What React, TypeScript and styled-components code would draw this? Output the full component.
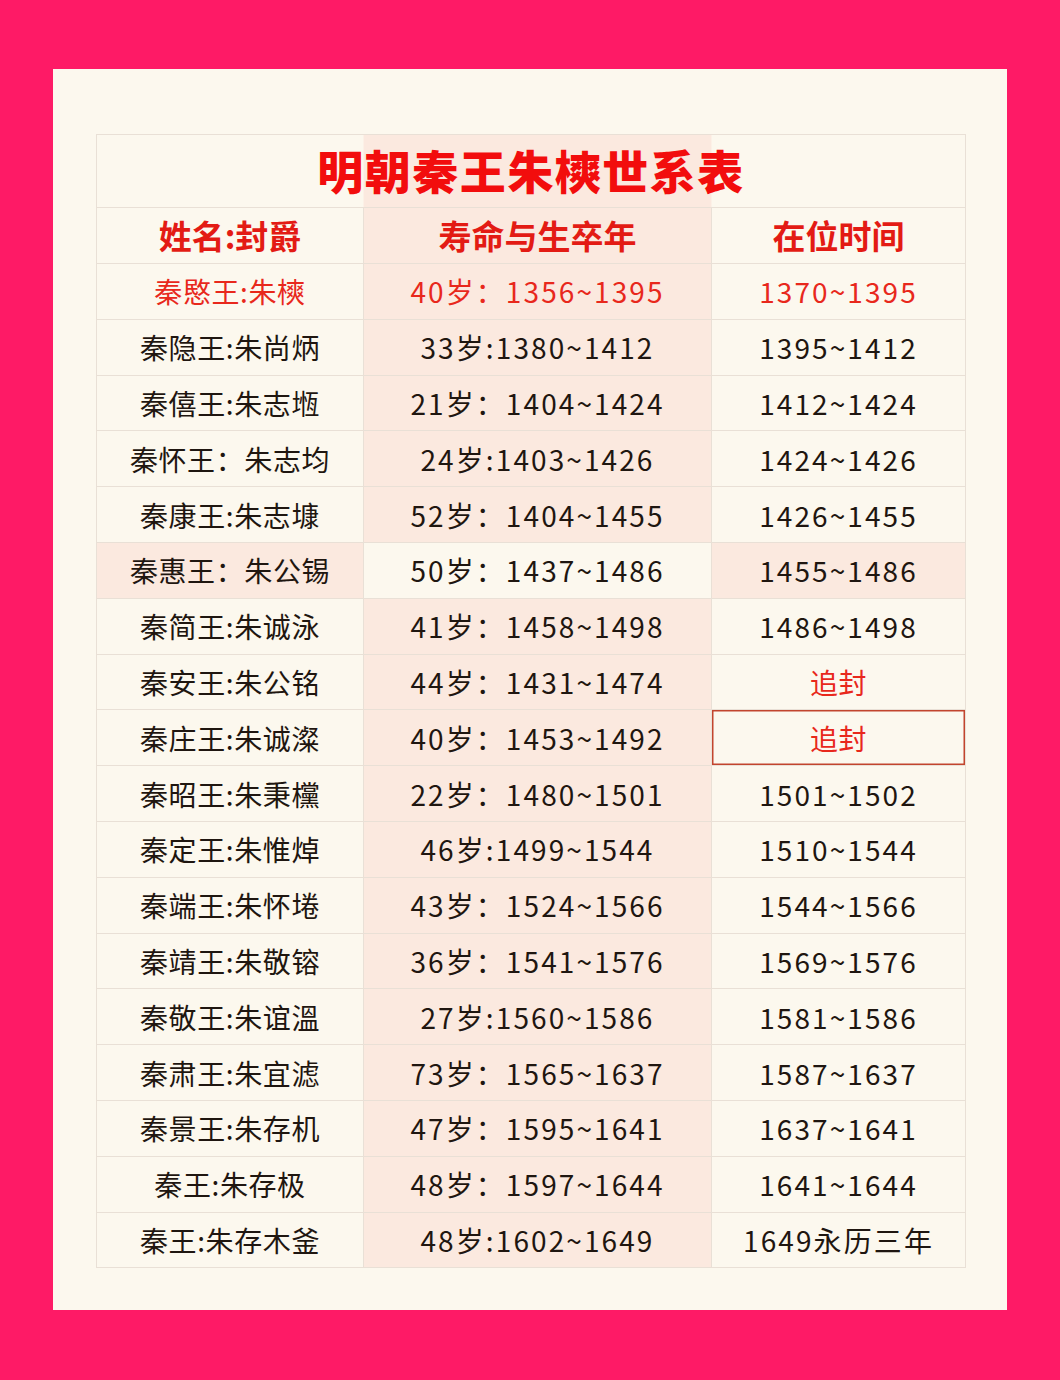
import styled, { createGlobalStyle } from 'styled-components'

const GlobalStyle = createGlobalStyle`
  html, body {
    margin: 0;
    padding: 0;
    background: #fe1a66;
  }
  body {
    font-family: "Noto Sans CJK SC", "Noto Sans", sans-serif;
  }
`

const CREAM = '#fcf8ee'
const PINK = '#fbe9df'
const LINE = '#e9e0d6'

interface Row {
  name: string
  life: string
  reign: string
  red?: boolean
  reignRed?: boolean
  boxed?: boolean
  swap?: boolean
}

const rows: Row[] = [
  { name: '秦愍王:朱樉', life: '40岁：1356~1395', reign: '1370~1395', red: true },
  { name: '秦隐王:朱尚炳', life: '33岁:1380~1412', reign: '1395~1412' },
  { name: '秦僖王:朱志堩', life: '21岁：1404~1424', reign: '1412~1424' },
  { name: '秦怀王：朱志均', life: '24岁:1403~1426', reign: '1424~1426' },
  { name: '秦康王:朱志𡐓', life: '52岁：1404~1455', reign: '1426~1455' },
  { name: '秦惠王：朱公锡', life: '50岁：1437~1486', reign: '1455~1486', swap: true },
  { name: '秦简王:朱诚泳', life: '41岁：1458~1498', reign: '1486~1498' },
  { name: '秦安王:朱公铭', life: '44岁：1431~1474', reign: '追封', reignRed: true },
  { name: '秦庄王:朱诚澯', life: '40岁：1453~1492', reign: '追封', reignRed: true, boxed: true },
  { name: '秦昭王:朱秉欓', life: '22岁：1480~1501', reign: '1501~1502' },
  { name: '秦定王:朱惟焯', life: '46岁:1499~1544', reign: '1510~1544' },
  { name: '秦端王:朱怀埢', life: '43岁：1524~1566', reign: '1544~1566' },
  { name: '秦靖王:朱敬镕', life: '36岁：1541~1576', reign: '1569~1576' },
  { name: '秦敬王:朱谊溫', life: '27岁:1560~1586', reign: '1581~1586' },
  { name: '秦肃王:朱宜滤', life: '73岁：1565~1637', reign: '1587~1637' },
  { name: '秦景王:朱存机', life: '47岁：1595~1641', reign: '1637~1641' },
  { name: '秦王:朱存极', life: '48岁：1597~1644', reign: '1641~1644' },
  { name: '秦王:朱存木釜', life: '48岁:1602~1649', reign: '1649永历三年' },
]

const Page = styled.div`
  width: 1060px;
  height: 1380px;
  padding: 69px 53px 0;
  box-sizing: border-box;
`

const Card = styled.div`
  width: 954px;
  height: 1241px;
  background: ${CREAM};
  padding: 65px 42px 0 43px;
  box-sizing: border-box;
`

const Table = styled.table`
  width: 869px;
  border-collapse: collapse;
  table-layout: fixed;
  border: 1px solid ${LINE};
`

const TitleCell = styled.th`
  height: 73px;
  padding: 0 0 4px;
  box-sizing: border-box;
  border: 1px solid ${LINE};
  background: linear-gradient(
    to right,
    ${CREAM} 0,
    ${CREAM} 30.7%,
    ${PINK} 30.7%,
    ${PINK} 70.7%,
    ${CREAM} 70.7%
  );
  color: #f20d0d;
  font-size: 46px;
  font-weight: 900;
  letter-spacing: 1.5px;
  line-height: 1;
  text-align: center;
`

const HeadCell = styled.th<{ $pink?: boolean }>`
  height: 55px;
  padding: 0;
  border: 1px solid ${LINE};
  background: ${p => (p.$pink ? PINK : CREAM)};
  color: #e31b14;
  font-size: 33px;
  font-weight: 700;
  line-height: 1;
  text-align: center;
`

const Cell = styled.td<{ $pink?: boolean; $red?: boolean; $boxed?: boolean; $num?: boolean }>`
  height: 54.8px;
  padding: 0;
  border: 1px solid ${LINE};
  box-shadow: ${p => (p.$boxed ? 'inset 0 0 0 1.5px #c2452e' : 'none')};
  background: ${p => (p.$pink ? PINK : CREAM)};
  color: ${p => (p.$red ? '#e8281c' : '#1f1610')};
  font-size: 28px;
  font-weight: 400;
  line-height: 1;
  text-align: center;
  white-space: nowrap;
  letter-spacing: ${p => (p.$num ? '2.1px' : '0.6px')};
`

export default function App() {
  return (
    <>
      <GlobalStyle />
      <Page>
        <Card>
          <Table>
            <colgroup>
              <col style={{ width: 267 }} />
              <col style={{ width: 348 }} />
              <col style={{ width: 254 }} />
            </colgroup>
            <thead>
              <tr>
                <TitleCell colSpan={3}>明朝秦王朱樉世系表</TitleCell>
              </tr>
              <tr>
                <HeadCell>姓名:封爵</HeadCell>
                <HeadCell $pink>寿命与生卒年</HeadCell>
                <HeadCell>在位时间</HeadCell>
              </tr>
            </thead>
            <tbody>
              {rows.map(r => (
                <tr key={r.name}>
                  <Cell $pink={r.swap} $red={r.red}>{r.name}</Cell>
                  <Cell $pink={!r.swap} $red={r.red} $num>{r.life}</Cell>
                  <Cell
                    $pink={r.swap}
                    $red={r.red || r.reignRed}
                    $boxed={r.boxed}
                    $num={!r.reignRed}
                  >
                    {r.reign}
                  </Cell>
                </tr>
              ))}
            </tbody>
          </Table>
        </Card>
      </Page>
    </>
  )
}
